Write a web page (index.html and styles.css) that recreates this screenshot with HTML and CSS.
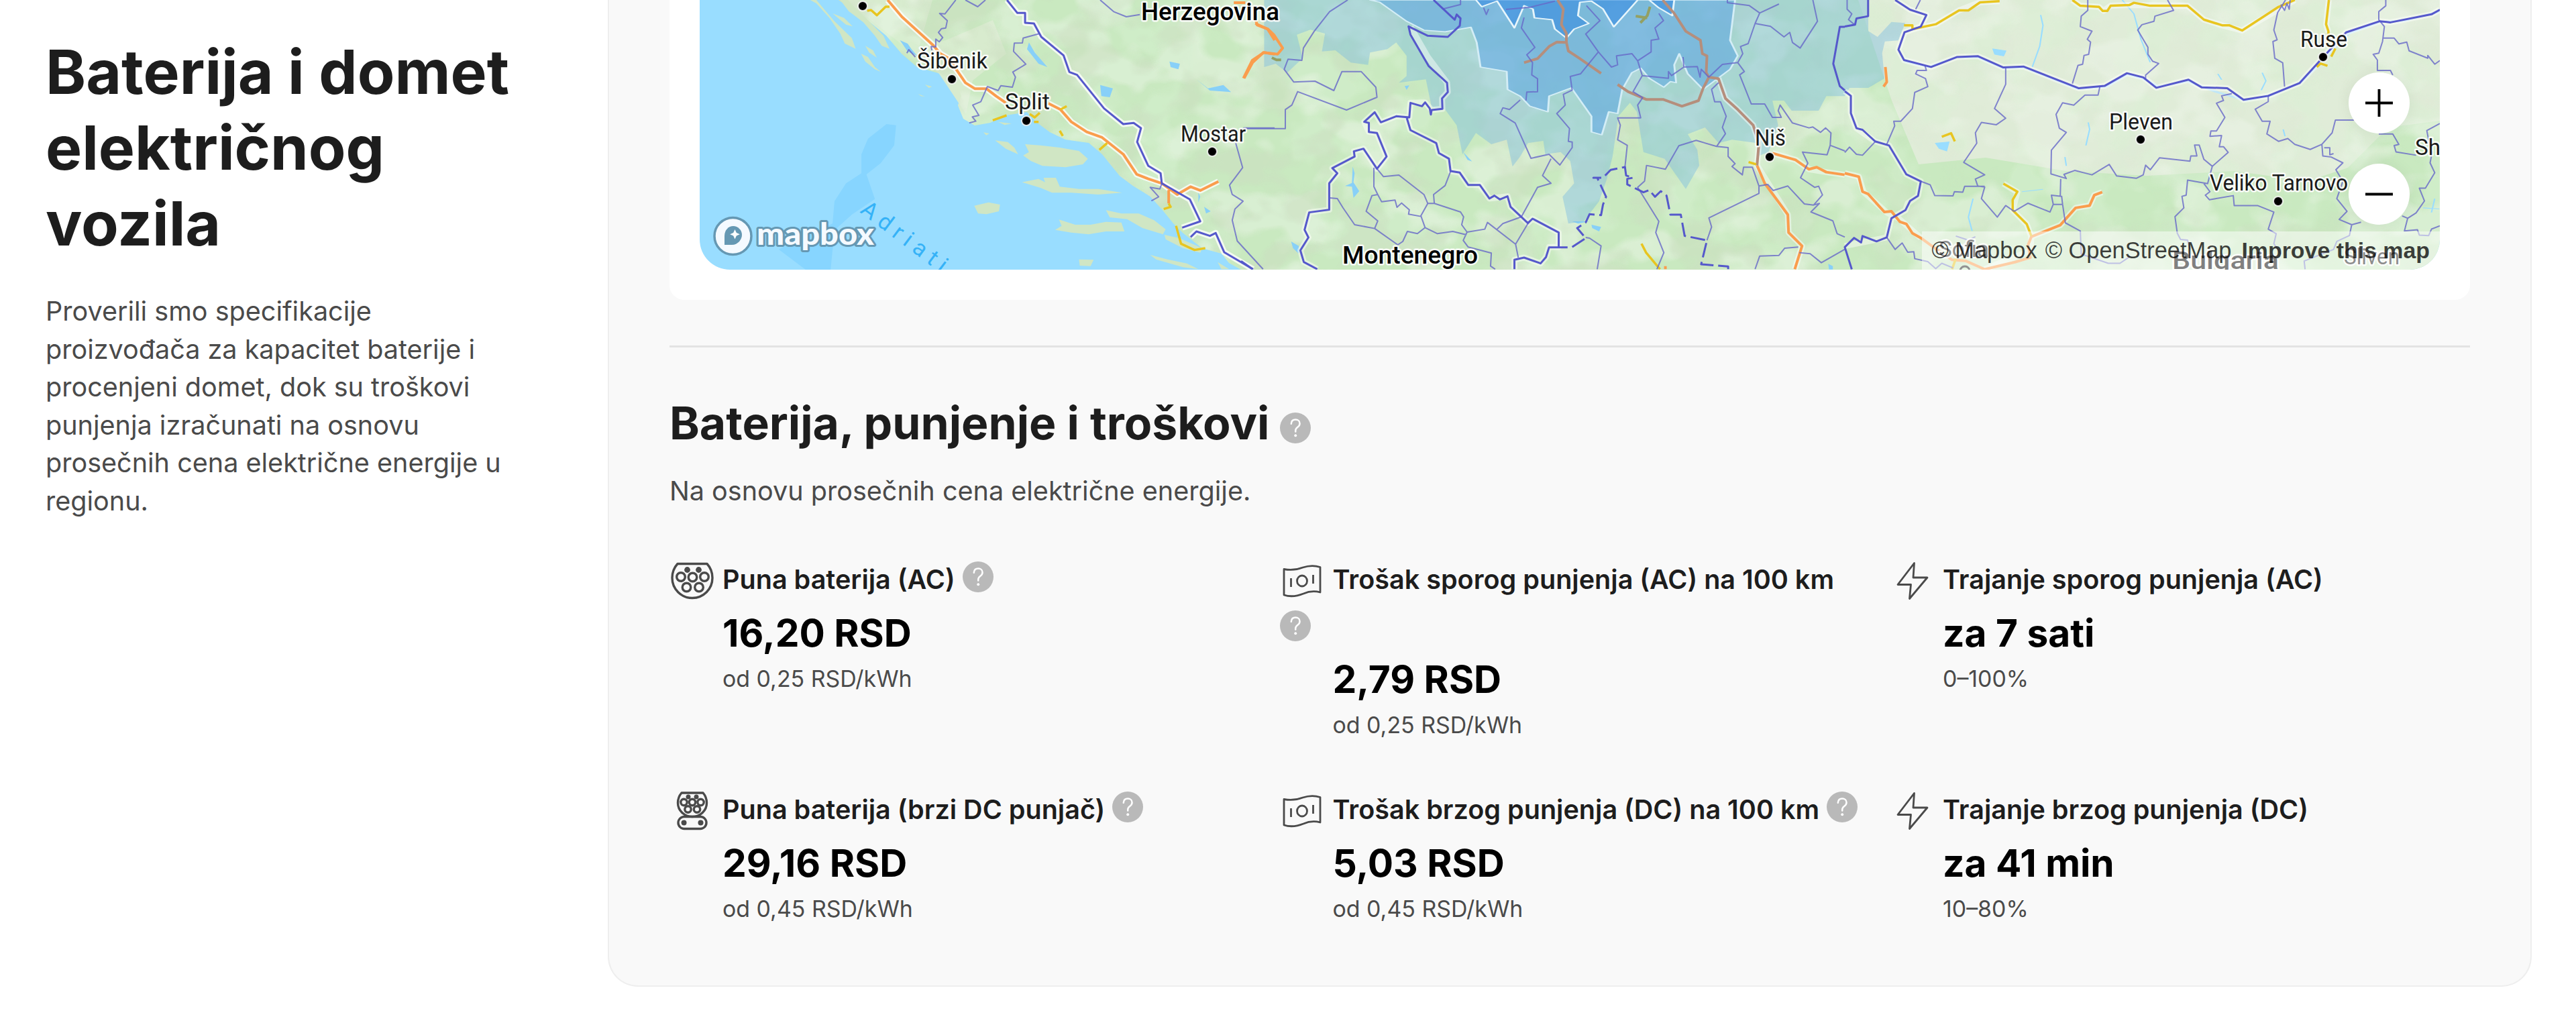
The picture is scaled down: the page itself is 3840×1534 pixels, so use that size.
FILE: index.html
```html
<!DOCTYPE html>
<html lang="sr-Latn">
<head>
<meta charset="utf-8">
<title>Baterija i domet električnog vozila</title>
<link rel="stylesheet" href="styles.css">
</head>
<body>
<svg class="defs" width="0" height="0" aria-hidden="true">
  <symbol id="help" viewBox="0 0 20 20"><circle cx="10" cy="10" r="10" fill="#b9b9b9"/><path d="M7.300 7.300C7.400 5.600 8.500 4.600 10.100 4.600c1.600 0 2.750 1 2.750 2.450 0 1.100-.5 1.800-1.500 2.500-.95.65-1.250 1.150-1.250 2.100v.7" fill="none" stroke="#fff" stroke-width="1.100" stroke-linecap="round"/><circle cx="10.100" cy="14.900" r=".85" fill="#fff"/></symbol>
  <symbol id="ac" viewBox="0 0 66 58"><g fill="none" stroke="#4a4a4a" stroke-width="3.400"><path d="M11 3.500H55C60 9 63 16 63 24.500a30 30 0 0 1-60 0C3 16 6 9 11 3.500z" stroke-linejoin="round"/><circle cx="16" cy="23" r="6.300"/><circle cx="33.500" cy="23.500" r="6.300"/><circle cx="51" cy="23" r="6.300"/><circle cx="24.500" cy="38.500" r="6.300"/><circle cx="43" cy="38.500" r="6.300"/></g><g fill="#4a4a4a"><circle cx="25.500" cy="12.500" r="4.400"/><circle cx="42.500" cy="12.500" r="4.400"/></g></symbol>
  <symbol id="dc" viewBox="0 0 50 60"><g fill="none" stroke="#4a4a4a" stroke-width="3.400"><path d="M9 3H41c3.500 4 5.500 9 5.500 15A21.500 20.500 0 0 1 25 38.500 21.500 20.500 0 0 1 3.500 18C3.500 12 5.500 7 9 3z" stroke-linejoin="round"/><circle cx="12.500" cy="17" r="4.700"/><circle cx="25" cy="17" r="4.700"/><circle cx="37.500" cy="17" r="4.700"/><circle cx="18.500" cy="27.500" r="4.700"/><circle cx="32" cy="27.500" r="4.700"/><rect x="4" y="38.500" width="42" height="18" rx="9"/></g><g fill="#4a4a4a"><circle cx="19" cy="9" r="3.500"/><circle cx="31" cy="9" r="3.500"/><circle cx="12.500" cy="47.500" r="4"/><circle cx="37.500" cy="47.500" r="4"/></g></symbol>
  <symbol id="cash" viewBox="0 0 60 50"><g fill="none" stroke="#4a4a4a" stroke-width="2.800" stroke-linejoin="round"><path d="M3 7.500C14 9.500 22 8.500 31 5 40 2 49 1.800 57 4.500V42C48 39.500 40 40.500 32 44 22 48 12 49 3 46z"/><ellipse cx="30" cy="25" rx="7.500" ry="8"/><path d="M13.500 21v13M46.500 16v13"/></g></symbol>
  <symbol id="bolt" viewBox="0 0 48 58"><path d="M26.500 2.500L2 34.500H21.500L19.500 55.500 46 24H25z" fill="none" stroke="#4a4a4a" stroke-width="2.800" stroke-linejoin="round"/></symbol>
</svg>

<main class="page">
  <aside class="intro">
    <h1>Baterija i domet električnog vozila</h1>
    <p>Proverili smo specifikacije<br>proizvođača za kapacitet baterije i<br>procenjeni domet, dok su troškovi<br>punjenja izračunati na osnovu<br>prosečnih cena električne energije u<br>regionu.</p>
  </aside>

  <section class="card">
    <div class="panel">
      <div class="map">
        <svg class="terrain" viewBox="1043 0 2594 402" preserveAspectRatio="none">
          <defs>
            <filter id="relief" x="0" y="0" width="100%" height="100%"><feTurbulence type="fractalNoise" baseFrequency=".014 .018" numOctaves="3" seed="8"/><feColorMatrix values="0 0 0 0 .60  0 0 0 0 .72  0 0 0 0 .53  6 0 0 0 -2.900"/></filter>
            <filter id="meadow" x="0" y="0" width="100%" height="100%"><feTurbulence type="fractalNoise" baseFrequency=".010 .014" numOctaves="3" seed="31"/><feColorMatrix values="0 0 0 0 .88  0 0 0 0 .93  0 0 0 0 .85  8 0 0 0 -4"/></filter>
            <filter id="forest" x="0" y="0" width="100%" height="100%"><feTurbulence type="fractalNoise" baseFrequency=".013" numOctaves="3" seed="55"/><feColorMatrix values="0 0 0 0 .70  0 0 0 0 .89  0 0 0 0 .66  7 0 0 0 -3.400"/></filter>
            <linearGradient id="fade"><stop offset="0" stop-color="#fff"/><stop offset=".61" stop-color="#fff"/><stop offset=".67" stop-color="#222"/><stop offset="1" stop-color="#111"/></linearGradient>
            <mask id="hills"><rect x="1043" y="0" width="2594" height="402" fill="url(#fade)"/><path d="M2740 402L2750 150 2820 270 2920 300 3637 320V402z" fill="#aaa"/></mask>
            <clipPath id="coast"><path d="M1250 0L1287 25 1321 53 1344 80 1367 100 1402 110 1428 130 1433 143 1428 157 1436 177 1453 187 1476 183 1499 172 1531 167 1545 182 1565 197 1588 208 1623 213 1643 230 1669 262 1689 277 1715 293 1732 312 1749 333 1763 347 1792 370 1821 378 1832 392 1850 402H3637V0z"/></clipPath>
          </defs>
          <rect x="1043" y="0" width="2594" height="402" fill="#99ddff"/>
          <!-- deep water -->
          <g transform="translate(1000 0) scale(.574 .3333)" fill="#87d5ff">
            <path d="M585 560L580 650 545 730 508 780 530 890 470 960 425 1030 415 1206H350L280 1115 420 1000 425 900 455 820 495 775 495 690 512 620 560 555z"/>
          </g>
          <path d="M1250 0L1287 25 1321 53 1344 80 1367 100 1402 110 1428 130 1433 143 1428 157 1436 177 1453 187 1476 183 1499 172 1531 167 1545 182 1565 197 1588 208 1623 213 1643 230 1669 262 1689 277 1715 293 1732 312 1749 333 1763 347 1792 370 1821 378 1832 392 1850 402H3637V0z" fill="#c9e9c0"/>
          <path d="M2770 0H3637V180L3560 190 3500 250 3440 270 3330 255 3200 262 3080 255 2960 235 2860 245 2820 150z" fill="#e0ecd8"/>
          <path d="M1260 0H1390L1370 70 1410 60 1480 30 1500 80 1450 120 1440 170 1400 110z" fill="#d8ebce"/>
          <g clip-path="url(#coast)">
            <rect x="1043" width="2594" height="402" filter="url(#forest)" opacity=".4"/>
            <rect x="1043" width="2594" height="402" filter="url(#meadow)" opacity=".4"/>
            <g mask="url(#hills)"><rect x="1043" width="2594" height="402" filter="url(#relief)" opacity=".5"/></g>
          </g>
          <!-- islands and inland water, west -->
          <g transform="translate(1000 0) scale(.574 .3333)">
            <g fill="#d0e6c4">
              <path d="M362 0L378 15 412 80 440 150 452 195 480 218 470 170 425 95 400 45 378 0z"/>
              <path d="M440 0L462 50 500 100 530 160 548 205 568 218 552 160 515 95 470 20 460 0z"/>
              <path d="M420 60L450 80 472 118 455 110zM494 240L512 255 530 300 546 322 530 310 505 275zM505 205L525 225 535 258 515 235zM660 378l10 15 8-5zM642 420l18 12-10-2z"/>
              <path d="M842 628L875 635 892 660 902 690 870 665zM920 645L960 650 1010 660 1060 675 1083 710 1070 735 1025 748 965 742 935 720 915 695 930 680z"/>
              <path d="M912 815L955 800 972 815 968 795 1000 795 1010 835 1060 845 1110 845 1172 862 1110 870 1040 862 990 862 960 840z"/>
              <path d="M788 920L825 905 855 915 852 945 820 958 798 955zM998 1028L1015 1010 1008 982 1050 1005 1090 1005 1130 992 1170 995 1178 1035 1130 1035 1085 1048 1040 1040z"/>
              <path d="M1130 940L1170 955 1215 955 1255 985 1285 1025 1278 1048 1225 1020 1185 980 1140 972zM1245 1140L1290 1160 1340 1178 1370 1204 1330 1195 1260 1160zM1060 1160L1098 1162 1090 1190 1062 1188zM1282 1050L1320 1065 1380 1110 1375 1130 1330 1110 1285 1070zM1420 1172L1450 1204 1430 1204z"/>
              <path d="M850 545l35 8-18 6zM812 592l15 5-8 8z"/>
            </g>
            <g fill="#88d0f8">
              <path d="M930 190L945 235 978 300 955 285 925 220zM1115 380L1148 395 1140 435 1118 430zM1295 275L1322 285 1318 310 1298 300zM1365 355L1395 395 1435 380 1455 412 1400 405zM1385 925L1402 945 1390 955zM595 180L615 195 625 220 640 250 615 230zM1370 860L1375 880 1370 905z"/>
            </g>
          </g>
          <!-- inland water, centre and east -->
          <g transform="translate(1850 0) scale(.574 .3333)" fill="#88d0f8"><path d="M290 745L295 775 292 815 307 855 292 885 288 835 270 832 288 818zM425 385L437 382 430 402zM577 680L600 722 588 715zM910 1005L935 1015 930 1035 912 1020zM860 990H905L875 1000zM130 1080L150 1100 150 1135 135 1110zM1525 1180l12 10v15h-10z"/></g>
          <g transform="translate(2750 0) scale(.6952 .3443)" fill="none" stroke="#99ddff" stroke-width="3">
            <path d="M420 65L425 110 418 200 402 290M595 0L620 60 635 170 655 270M800 320L808 345M895 315L903 350 893 390M522 530L525 560 517 630M472 680L475 718M275 860L265 940 273 1000M380 830L425 820M940 560L944 590M1240 900L1275 905M1265 860L1258 920"/>
            <path d="M318 212L345 220 340 242 322 235zM195 620l28-5-5 38-15-10z" fill="#99ddff"/>
            <path d="M128 265L180 290 240 248 285 247 340 295 385 292 500 385 560 375 605 322 640 340 672 375 735 352 800 400 860 435 910 415 975 360 1020 270 1080 145 1150 93 1200 90 1276 50" stroke="#bfe6f7" stroke-width="8"/>
          </g>
          <!-- range zones -->
          <g transform="translate(1850 0) scale(.574 .3333)" stroke-linejoin="round">
            <path d="M60 0V300L90 285 120 325 160 260 145 155 180 133 218 150 210 230 245 225 285 280 330 290 335 235 380 220 403 190 430 250V340L410 370 480 355 495 480 530 490 560 560 575 690 610 595 650 645 690 625 705 745 725 700 745 640 785 630 790 690 830 680 855 720 865 820 835 880 850 1000 890 990 930 900 950 800 965 700 980 520 1010 460 1028 500 1045 680 1100 710 1155 845 1190 740 1185 670 1160 600 1205 570 1240 640 1275 625 1340 640V700L1370 680 1395 560 1380 450 1410 450 1430 495H1500L1520 430H1568L1580 393 1629 393 1671 351 1665 238 1672 185 1707 181 1725 103 1689 98 1653 165 1629 139V0z" fill="rgba(118,186,226,.42)"/>
            <path d="M335 0L360 10 430 95 475 135 530 142 597 122 612 190 622 300 690 320 692 400 725 430 750 475 797 500 800 430 858 393 910 520V590L937 603 955 500 978 508 990 400 1015 325 1038 305 1060 350 1098 390 1115 365 1130 370 1125 290 1138 240 1160 330 1200 400 1270 310 1290 250 1270 180 1283 0z" fill="rgba(75,155,230,.46)" stroke="#d3edf6" stroke-width="5"/>
            <path d="M610 0L625 30 665 5 710 125 735 25 758 40 762 80 808 88 815 130 845 170 865 130 903 105 875 70 880 10 910 5 940 40 968 120 1030 0M1060 0L1085 35 1120 70 1125 0z" fill="rgba(40,130,225,.5)" stroke="#e6f5fb" stroke-width="5"/>
          </g>
          <!-- west: roads and borders -->
          <g class="casing" transform="translate(1000 0) scale(.574 .3333)">
            <path d="M563 0L600 75 680 200 700 240 722 262 745 320 765 370 790 397H820L845 430 870 460M980 462L1012 490 1040 545 1080 590 1120 615 1175 690 1210 780 1275 820 1315 870 1350 835 1375 852 1422 812"/>
            <path d="M873 0L900 58H920V102L943 105 962 165 1020 248 1035 322 1055 335 1125 485 1175 555 1202 550 1221 573 1211 635 1240 742 1272 775 1275 820 1348 892 1375 990 1328 1018M1350 1060L1365 1035 1400 1055 1415 1042 1437 1128 1512 1204"/>
          </g>
          <g class="road" transform="translate(1000 0) scale(.574 .3333)">
            <path d="M563 0L600 75 680 200 700 240 722 262 745 320 765 370 790 397H820L845 430 870 460M980 462L1012 490 1040 545 1080 590 1120 615 1175 690 1210 780 1240 800 1275 820 1315 870 1350 835 1375 852 1422 812M1293 850V910M1487 350L1510 270 1540 235 1568 242M1518 105L1550 130 1568 180M1462 12H1492"/>
            <path class="yellow" d="M510 48L520 45 535 68 558 30H568M836 538L872 516M932 510L945 525 958 505M943 545H955M1012 490L1028 475M1010 585L1018 608M1113 670L1133 640M1293 910L1298 925 1280 935M1312 1010L1325 1090 1360 1118 1388 1110"/>
          </g>
          <g class="minor" transform="translate(1000 0) scale(.574 .3333)">
            <path d="M740 0L712 62 698 60 718 92 714 125 703 128 695 145 706 168 697 187 688 175V210L676 208 678 225M613 238L618 222 635 255M765 0L797 30 817 0M1115 0L1150 52 1183 75 1218 65M958 150L915 170 913 192 892 193 890 230 922 287 888 322 895 345 887 390 857 383 850 405 822 387 805 455 784 470 800 516 783 523 792 542 775 550M1487 572H1568M1467 640L1485 750 1451 828 1458 870 1486 900 1465 935 1458 985 1471 1078 1538 1204M1275 822L1270 845 1245 838 1267 880 1248 898"/>
          </g>
          <g class="major" transform="translate(1000 0) scale(.574 .3333)">
            <path d="M873 0L900 58H920V102L943 105 962 165 1020 248 1035 322 1055 335 1125 485 1175 555 1202 550 1221 573 1211 635 1240 742 1272 775 1275 820 1348 892 1375 990 1328 1018M1350 1060L1365 1035 1400 1055 1415 1042 1437 1128 1512 1204"/>
          </g>
          <!-- centre: roads and borders -->
          <g class="casing soft" transform="translate(1850 0) scale(.574 .3333)">
            <path d="M440 120L485 255 535 370 537 412 522 440 523 487 495 492 478 458 440 460 437 525 403 520 363 547 347 502 320 545 332 590 353 595 378 700 353 755 318 665 293 677 295 700 237 752 250 775 229 820V938L177 950 165 1028 175 1062 154 1120 163 1172 198 1204M430 525L440 582 507 640 514 685 540 710 544 765 568 772 590 827H620L645 888 692 878 700 925 745 998 757 978 825 1040V1105H800L792 1150 778 1178 735 1152 710 1162V1204M1240 350L1258 440 1290 490 1330 560 1345 640 1340 740 1420 960 1422 1040 1457 1100 1438 1204M1380 685L1440 715 1475 757 1520 770 1568 782"/>
          </g>
          <g class="road" transform="translate(1850 0) scale(.574 .3333)">
            <path d="M8 350L30 280 58 235 95 242 108 215 85 155 70 130 42 112 38 90M1380 685L1440 715 1475 757 1495 748 1520 770 1568 782M1340 740L1360 820 1420 960 1422 1040 1457 1100 1438 1204M1102 1190V1204"/>
            <path class="brown" d="M822 0L837 40 832 110 845 150V190L820 188 800 208 770 262 735 280M845 190L850 228 880 262 935 328M1095 0L1125 60 1155 140 1193 180 1198 240 1210 250 1208 325 1215 345 1200 395 1188 450 1145 475 1097 445H1053L1005 410 978 378M1215 345L1240 352 1258 440 1290 490 1330 560 1345 640 1340 740"/>
            <path class="yellow" d="M1040 1090L1052 1130 1088 1204M1318 725L1338 735"/><path class="olive" d="M80 258L92 268H104M1062 30L1055 70 1037 102M1025 72L1055 80"/>
          </g>
          <g class="minor" transform="translate(1850 0) scale(.574 .3333)">
            <path d="M277 0L230 52 190 140 162 215 158 270 122 265 112 310 137 367 192 363 241 405 262 320H312L350 390 353 435 274 492 147 410 132 470 115 490V575H8M525 40L570 20V0M630 35L637 65 643 40M688 42L752 32 815 5M735 78L728 125 763 212 742 245 757 280 755 335 770 352V410L742 412 740 450M725 447L697 490 680 482 673 508 712 550 753 708 800 690 828 738 860 660V635L850 632 853 575 820 508 842 470 837 422 860 403 855 342 882 330 928 232 895 152 932 92 897 25M928 232L962 300 978 290 975 250 1015 240 1030 272 1065 232V180L1085 175 1075 125 1097 92 1085 60M1030 272L1042 338 1018 410 1043 437 1030 470 1038 527H978L985 560 978 625 1003 650 997 748M1042 338L1110 350V320L1118 338 1150 300 1148 255M1148 300L1185 298 1192 345 1195 310 1215 345 1250 288 1290 280M1263 0V12L1320 25 1347 58 1397 18M1347 58L1335 105 1375 118 1410 165 1425 145 1432 190 1452 215 1497 95 1485 0M1335 105L1317 195 1297 208 1303 240 1290 280 1307 320 1295 335 1325 465H1360L1380 525H1403L1395 495 1400 470 1432 550 1475 572 1485 568 1505 592 1518 572 1532 595 1530 650 1522 692 1458 680 1472 730 1453 795 1490 838 1500 833 1510 872 1487 917 1463 912 1420 832 1382 852 1368 825 1345 832 1328 748H1305L1302 782 1275 745 1283 732 1265 700V660L1235 655 1258 598 1250 570 1260 520 1245 455H1230L1222 400 1240 370M1235 655L1182 628 1137 652 1102 757 1053 740 1048 810 1030 838 1085 990 1077 1040 1098 1130 1080 1204M1530 650L1568 675M1345 835L1345 865 1215 975 1222 1015 1210 1075M1487 917L1502 910 1480 948 1537 988 1548 1045 1568 1060M1335 1204L1347 1145 1397 1142 1412 1110 1447 1105M1450 1130L1478 1135 1507 1175 1568 1115M345 750V835L355 870 340 875 325 945 355 988 347 1022 295 1005 265 930 250 888 230 885M353 755L370 790 410 783 475 870 485 910 467 965 478 1018 458 1045 432 1035 420 1080 407 1095 347 1022M355 870L365 902 400 895 405 927 417 908 437 938 435 958 467 968M544 768L530 830 500 870 502 910 570 948 578 970 573 1005 587 1038 577 1075 590 1105 650 1132 648 1190 660 1204M485 910H502M478 1018L510 1045 550 1035 585 1050M587 1038L633 1025 640 995 713 1092 720 1152M665 1025L680 1000 728 970 770 838 805 820 783 785 805 710M745 1000L713 1092M895 1062L905 1065 935 1100 925 1204"/>
          </g>
          <g class="major" transform="translate(1850 0) scale(.574 .3333)">
            <path d="M500 0L555 88 560 65 570 82 568 115 537 165 485 160 435 118 440 155 487 295 535 370 537 412 522 440 523 487 495 492 493 512 490 485 478 458 470 475 440 460 437 525 403 520 363 547 347 502 320 545 332 550V590L353 595 378 700 353 755 318 665 293 677 295 700 237 752 250 775 229 820V938L177 950 165 1028 175 1062 154 1120 163 1172 198 1204M430 525L440 582 507 640 514 685 540 710 544 765 568 772 590 827H620L645 888 658 875 672 892 692 878 700 925 745 998 757 978 825 1040V1105M848 1106H800L792 1150 778 1178 735 1152 710 1162V1204M1568 120H1555L1538 285 1555 385 1568 405M0 1168L30 1204"/>
            <path stroke-dasharray="22 7" d="M860 1105L895 1065 873 1020 895 995 905 958 935 962 940 915 948 880 925 795H915L940 795 960 760 997 747 1000 785 1018 795 1003 800V825L1045 860 1060 850 1075 880 1090 855 1105 875 1115 960H1142L1152 1055 1210 1075 1195 1182 1265 1192V1204"/>
          </g>
          <!-- east: roads and borders -->
          <g class="casing soft" transform="translate(2750 0) scale(.6952 .3443)">
            <path d="M108 0L140 42 175 65 163 115 128 140 115 215 127 260 185 290 240 247 285 243 340 292 383 288 502 382 557 372 605 317 640 335 668 380 737 345 765 378 820 382 855 432 908 415 975 360 1026 247 1075 140 1147 92 1170 97 1258 62 1276 42M488 0L505 25 545 30 555 47 570 25 610 22 735 25 770 85 810 110 852 132 965 0M332 5L290 10 245 45 195 105 148 125M1038 0L1032 105 1037 140M0 750L30 765 40 830 90 920 115 945 163 1030M552 832L535 845 525 890 495 900 462 975 400 1025 398 1085 300 1166M340 795L370 832 360 910 390 970 400 1025M0 395L13 415V490L25 555 65 612 95 630 132 755 163 785 157 848 135 880 130 910 100 945 90 1028 0 1065"/>
          </g>
          <g class="road" transform="translate(2750 0) scale(.6952 .3443)">
            <path d="M0 750L30 765 38 830 50 840 85 918 100 915 118 960 132 970 145 1010 163 1030M552 832L535 845 525 890 495 900 462 975 400 1025 393 1060 398 1115 365 1135 300 1166M163 1030L190 1070 230 1125 260 1130 300 1166M87 290L90 355 83 375"/>
            <path class="yellow" d="M488 0L505 25 545 30 553 47H563L570 25 610 22 620 12 655 25 735 25 770 85 810 110H825L852 132 930 30 965 0M332 5L290 10 265 45H245L195 105 148 125M127 110H145V125M1038 0L1032 105 1037 135 1037 205M1052 210L1043 245M1012 290L1020 275 1035 285M340 795L370 830 360 865V910L390 970 400 1022M208 592L228 577 236 612M238 1120L230 1166"/>
          </g>
          <g class="minor" transform="translate(2750 0) scale(.6952 .3443)">
            <path d="M5 0V40L15 60 8 85 20 105M162 0L152 40M521 0V45L507 70 505 115 530 135 520 170 527 182 523 235 513 240 510 278 500 283 488 362M692 0L705 45 665 70 663 92 637 107 628 130 650 205V235L660 265 673 275 645 325V342M945 0L928 55 920 130 927 172 918 180 922 252 939 272 943 375M935 20L943 45 948 15 953 40 955 0M1160 0V25L1145 50V85L1157 115 1153 180 1145 230 1133 235 1142 260V305H1170L1175 325M1155 165H1178L1188 190 1205 182 1210 220 1250 252V240L1265 278 1276 262M172 285L175 305H155L152 320 173 340 178 375 150 400 145 470 120 525H105L107 545 90 625M345 295V365L321 470 345 512 325 540 293 530 280 575 283 620 255 703 300 757 280 775 285 805 300 810 293 860 327 940 345 890 363 915 393 880 440 918 447 885H467L473 965 505 1000 507 1100 565 1140H590L612 1110M547 375L543 412H515L491 455 467 445 453 495 460 555 475 573 443 650 442 753 475 773 470 755 493 738 530 757 567 712 583 762 625 772 640 757 645 715 655 735 675 683 740 698 742 675H755L750 628H760L770 690 788 720 822 660 812 635H803L808 587 783 590 785 567H797L815 508 797 447 812 435 808 415 830 405M908 415V440L880 473 895 525H912L905 580 930 612 950 600 965 625 998 647 1023 625 1045 575 1052 520H1092M1023 625L1025 675 1043 680 1068 705 1053 735 1068 785 1055 860 1077 915 1060 950 1087 973 1082 1020 1055 1045 1048 1080 985 1130 987 1166M1028 640H1040V670L1048 665M1145 580H1175L1188 625 1178 630 1182 658 1225 672M788 720L778 795 735 780 732 845 723 850 727 900 708 938 713 1010 720 1037 735 1040 740 1080M770 795L783 830 773 845 782 865 833 847 835 890H885L920 918 908 992 925 1012 920 1055 935 1100M1087 973L1107 962M1195 935L1207 945 1200 1000 1228 995 1232 1018 1252 1020 1258 992 1276 978M1207 945L1225 922 1243 870 1232 815H1245L1265 748 1255 705 1260 655M1255 640L1248 565 1276 535M163 785L183 800 193 847 232 848 235 830 253 832 257 807H300M467 885L465 850 443 845 447 885M462 850L463 775M90 1028L108 1080 123 1052 135 1092 148 1090 150 1120 178 1133 195 1163 208 1140 232 1160M238 1022L265 1040 280 1025M0 660L10 637 25 668 38 672 65 614"/>
          </g>
          <g class="major" transform="translate(2750 0) scale(.6952 .3443)">
            <path d="M50 0V70L25 80 22 107 0 115M108 0L140 42 175 65 163 115 128 140 115 215 127 260 185 290 240 247 285 243 340 292 383 288 502 382 557 372 605 317 640 335 668 380 737 345 765 378 820 382 855 432 908 415 975 360 1026 247 1075 140 1147 92 1170 97 1258 62 1276 42M0 395L13 415V490L25 555 38 562 65 612 95 630 132 755 163 785 157 848 140 870 130 910 100 945 90 1028 68 1045 38 1022 35 1050 20 1030 0 1070 15 1166"/>
          </g>
          <!-- place names -->
          <g class="place">
            <text x="1367" y="102" textLength="105" lengthAdjust="spacingAndGlyphs">Šibenik</text>
            <text x="1498" y="163" textLength="67" lengthAdjust="spacingAndGlyphs">Split</text>
            <text x="1760" y="211" textLength="97" lengthAdjust="spacingAndGlyphs">Mostar</text>
            <text x="2616" y="217" textLength="46" lengthAdjust="spacingAndGlyphs">Niš</text>
            <text x="3429" y="70" textLength="70" lengthAdjust="spacingAndGlyphs">Ruse</text>
            <text x="3144" y="193" textLength="95" lengthAdjust="spacingAndGlyphs">Pleven</text>
            <text x="3294" y="284" textLength="206" lengthAdjust="spacingAndGlyphs">Veliko Tarnovo</text>
            <text x="3600" y="231" textLength="38" lengthAdjust="spacingAndGlyphs">Sh</text>
            <text x="2890" y="383" textLength="75" lengthAdjust="spacingAndGlyphs">Sofia</text>
            <text x="3494" y="394" textLength="83" lengthAdjust="spacingAndGlyphs">Sliven</text>
            <text class="country" x="1701" y="30" textLength="206" lengthAdjust="spacingAndGlyphs">Herzegovina</text>
            <text class="country" x="2001" y="393" textLength="202" lengthAdjust="spacingAndGlyphs">Montenegro</text>
            <text class="country" x="3238" y="401" textLength="159" lengthAdjust="spacingAndGlyphs">Bulgaria</text>
          </g>
          <g stroke="#fff" stroke-opacity=".8" stroke-width="2"><circle cx="1286" cy="9" r="7"/><circle cx="1419" cy="118" r="7"/><circle cx="1530" cy="180" r="7"/><circle cx="1807" cy="226" r="7"/><circle cx="2638" cy="234" r="7"/><circle cx="3463" cy="85" r="7"/><circle cx="3191" cy="208" r="7"/><circle cx="3396" cy="300" r="7"/></g>
          <circle cx="2929" cy="404" r="7" fill="none" stroke="#222" stroke-width="3"/>
          <text class="sea" transform="translate(1281 316) rotate(37)" textLength="178">Adriatic</text>
          <!-- map provider mark -->
          <circle cx="1092.500" cy="352" r="27.500" fill="#f5faff" stroke="#6598b3" stroke-width="3.500"/>
          <path d="M1080 365V352c0-9 6-15 13-15s13 6 13 13-6 15-15 15z" fill="#6598b3"/>
          <path d="M1095.500 342l2.300 5 5 2.300-5 2.300-2.300 5-2.300-5-5-2.300 5-2.300z" fill="#fff"/>
          <text class="brand" x="1128" y="365" textLength="175" lengthAdjust="spacingAndGlyphs">mapbox</text>
        </svg>
        <div class="attribution"><span>© Mapbox</span><span>© OpenStreetMap</span><b>Improve this map</b></div>
        <div class="zoom">
          <button aria-label="+"><svg viewBox="0 0 20 20"><path d="M5.500 10h9M10 5.500v9"/></svg></button>
          <button aria-label="−"><svg viewBox="0 0 20 20"><path d="M5.500 10h9"/></svg></button>
        </div>
      </div>
    </div>
    <hr>
    <h2>Baterija, punjenje i troškovi<svg class="help"><use href="#help"/></svg></h2>
    <p class="lead">Na osnovu prosečnih cena električne energije.</p>

    <div class="stats">
      <article>
        <h3><span class="icon"><svg width="66" height="58"><use href="#ac"/></svg></span>Puna baterija (AC)<svg class="help"><use href="#help"/></svg></h3>
        <strong>16,20 RSD</strong><small>od 0,25 RSD/kWh</small>
      </article>
      <article>
        <h3><span class="icon"><svg width="60" height="50"><use href="#cash"/></svg></span>Trošak sporog punjenja (AC) na 100 km</h3>
        <div class="wrapped"><svg class="help"><use href="#help"/></svg></div>
        <strong>2,79 RSD</strong><small>od 0,25 RSD/kWh</small>
      </article>
      <article>
        <h3><span class="icon"><svg width="48" height="58"><use href="#bolt"/></svg></span>Trajanje sporog punjenja (AC)</h3>
        <strong>za 7 sati</strong><small>0–100%</small>
      </article>
      <article>
        <h3><span class="icon"><svg width="50" height="60"><use href="#dc"/></svg></span>Puna baterija (brzi DC punjač)<svg class="help"><use href="#help"/></svg></h3>
        <strong>29,16 RSD</strong><small>od 0,45 RSD/kWh</small>
      </article>
      <article>
        <h3><span class="icon"><svg width="60" height="50"><use href="#cash"/></svg></span>Trošak brzog punjenja (DC) na 100 km<svg class="help"><use href="#help"/></svg></h3>
        <strong>5,03 RSD</strong><small>od 0,45 RSD/kWh</small>
      </article>
      <article>
        <h3><span class="icon"><svg width="48" height="58"><use href="#bolt"/></svg></span>Trajanje brzog punjenja (DC)</h3>
        <strong>za 41 min</strong><small>10–80%</small>
      </article>
    </div>
  </section>
</main>
</body>
</html>
```
FILE: styles.css
```css
* { box-sizing: border-box; }
body { margin: 0; background: #fff; color: #1d1d1d; font-family: Inter, "Liberation Sans", sans-serif; overflow: hidden; }
h1, h2, h3, p { margin: 0; }
.defs { display: block; height: 0; }
.page { display: grid; grid-template-columns: 838px 2868px; height: 1534px; padding-left: 68px; }

.intro { padding-top: 51px; }
.intro h1 { width: 700px; font-size: 91px; line-height: 113px; font-weight: 700; }
.intro p { margin-top: 46px; font-size: 39.55px; line-height: 56.5px; color: #4a4a4a; white-space: nowrap; }

.card { height: 1471px; padding: 0 90px; background: #f9f9f9; border: 2px solid #eee; border-top: 0; border-radius: 0 0 45px 45px; }
.panel { height: 447px; padding: 0 45px 45px; background: #fff; border-radius: 0 0 22px 22px; }
.map { position: relative; height: 402px; overflow: hidden; border-radius: 0 0 45px 45px; }
.terrain { display: block; width: 100%; height: 402px; }

.casing { fill: none; stroke: #fff; stroke-opacity: .75; stroke-width: 9px; stroke-linejoin: round; }
.casing.soft { stroke-opacity: .45; }
.casing path, .road path, .minor path, .major path { vector-effect: non-scaling-stroke; }
.road { fill: none; stroke: #fa9d4d; stroke-width: 4px; stroke-linejoin: round; }
.road .yellow { stroke: #e8c520; stroke-width: 3.5px; }
.road .brown { stroke: #b58e7c; }
.road .olive { stroke: #93a063; }
.minor { fill: none; stroke: #6668c8; stroke-opacity: .8; stroke-width: 2px; stroke-linejoin: round; }
.major { fill: none; stroke: #5558cb; stroke-width: 3px; stroke-linejoin: round; }

.place { font: 400 33px Roboto, sans-serif; fill: #1a1a1a; stroke: #fff; stroke-opacity: .85; stroke-width: 5px; stroke-linejoin: round; paint-order: stroke; }
.place .country { font-size: 36px; font-weight: 500; fill: #000; }
.sea { font: 400 34px Roboto, sans-serif; fill: #35b2f7; }
.brand { font: 900 46px Lato, sans-serif; fill: #f5faff; stroke: #6598b3; stroke-width: 6px; stroke-linejoin: round; paint-order: stroke; }

.attribution { position: absolute; right: 0; bottom: 0; display: flex; justify-content: flex-end; gap: 12px; width: 772px; height: 57px; padding-right: 15px; background: rgba(255, 255, 255, .5); font: 34.4px/57px "Liberation Sans", Arial, sans-serif; color: rgba(0, 0, 0, .75); white-space: nowrap; }
.attribution b { margin-left: 3px; font-size: 33.9px; }
.zoom { position: absolute; right: 45px; top: 108px; display: flex; flex-direction: column; gap: 45px; }
.zoom button { width: 91px; height: 91px; padding: 0; border: 0; border-radius: 50%; background: #fff; box-shadow: 0 0 24px rgba(0, 0, 0, .06); }
.zoom svg { display: block; width: 91px; height: 91px; fill: none; stroke: #000; stroke-width: .85; }

hr { height: 3px; margin: 68px 0 70px; border: 0; background: #e3e3e3; }
h2 { display: flex; height: 84px; font-size: 67.8px; line-height: 84px; font-weight: 700; white-space: nowrap; }
h2 .help { margin: 27px 0 0 16px; }
.help { flex: none; display: block; width: 46px; height: 46px; }
.lead { margin-top: 32px; font-size: 39.55px; line-height: 56.5px; color: #4a4a4a; }

.stats { display: grid; grid-template-columns: repeat(3, 864.5px); column-gap: 45px; row-gap: 76px; margin-top: 75px; }
article { display: flex; flex-direction: column; }
h3 { display: flex; height: 56px; margin-bottom: 18px; font-size: 39.55px; line-height: 56px; font-weight: 600; white-space: nowrap; }
h3 .help { margin: 1px 0 0 11px; }
.icon { display: flex; align-items: center; justify-content: center; flex: none; width: 67px; height: 60px; margin-right: 12px; }
.icon svg { flex: none; display: block; }
.wrapped { height: 69px; }
strong { padding-left: 79px; font-size: 56.8px; line-height: 68px; font-weight: 700; color: #000; }
small { margin-top: 11px; padding-left: 79px; font-size: 33.9px; line-height: 45px; color: #4a4a4a; }
```
